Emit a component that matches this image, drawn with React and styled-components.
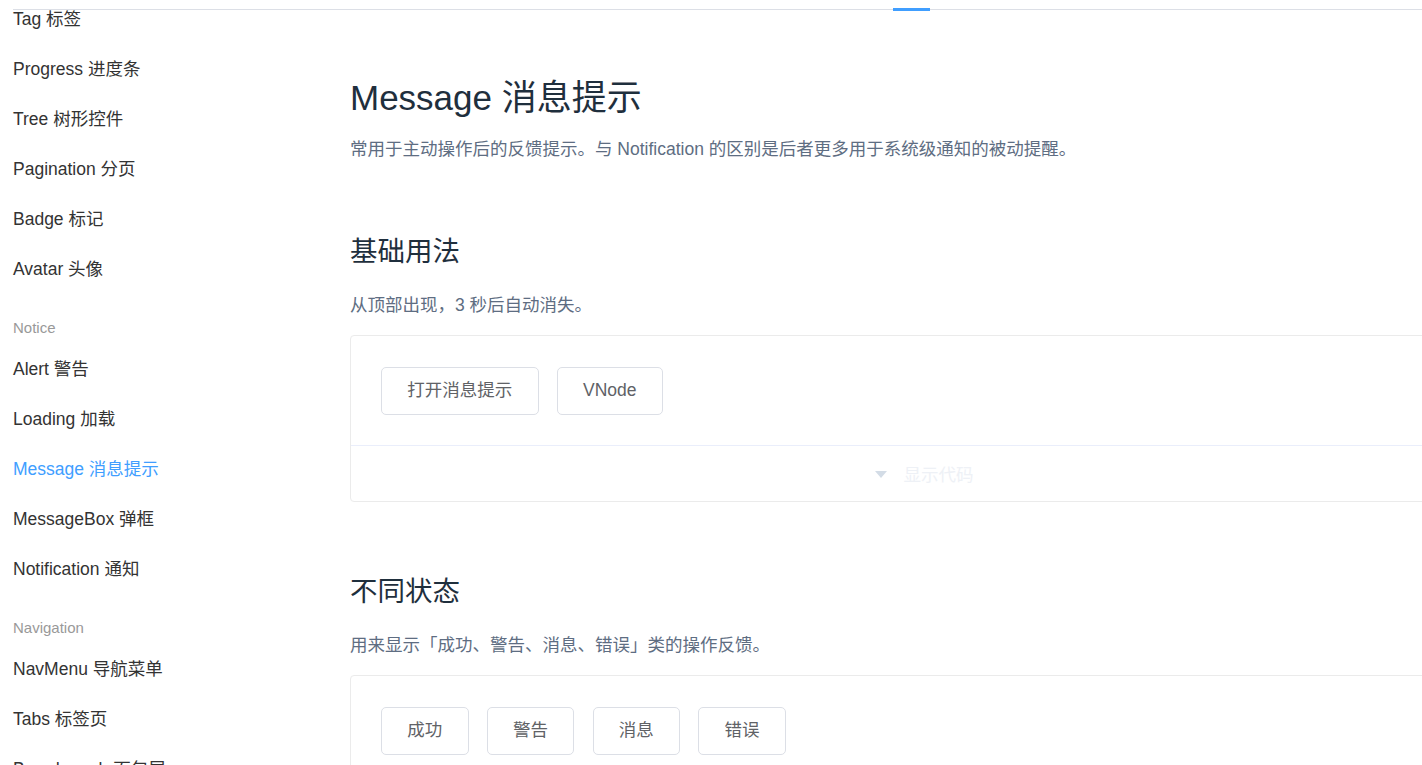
import React from "react";
import styled, { createGlobalStyle } from "styled-components";

const Global = createGlobalStyle`
  html, body {
    margin: 0;
    padding: 0;
    overflow: hidden;
    background: #fff;
    font-family: "Liberation Sans", "Noto Sans CJK SC", Arial, sans-serif;
  }
`;

const Page = styled.div`
  width: 1422px;
  height: 765px;
  overflow: hidden;
  display: flex;
  flex-direction: column;
`;

const Header = styled.header`
  position: relative;
  z-index: 2;
  display: flex;
  margin-left: 13px;
  height: 9px;
  border-bottom: 1px solid #dcdfe6;
  background: #fff;
  flex-shrink: 0;
`;

const HeaderTab = styled.div`
  margin-left: ${(p) => p.$offset}px;
  width: 37px;
  height: 11px;
  box-sizing: border-box;
  border-bottom: 3px solid ${(p) => (p.$active ? "#409eff" : "transparent")};
`;

const Body = styled.div`
  display: flex;
  flex: 1;
  min-height: 0;
`;

const Sidebar = styled.nav`
  width: 337px;
  padding-left: 13px;
  flex-shrink: 0;
  overflow: hidden;
`;

const NavList = styled.ul`
  list-style: none;
  margin: -16px 0 0;
  padding: 0;
`;

const NavItem = styled.li`
  height: 50px;
  line-height: 50px;
  font-size: 17.5px;
  color: ${(p) => (p.$active ? "#409eff" : "#333")};
  white-space: nowrap;
`;

const NavGroup = styled.li`
  margin-top: 18px;
  height: 32px;
  line-height: 32px;
  font-size: 15px;
  color: #999;
`;

const Main = styled.main`
  width: 1148px;
  flex-shrink: 0;
  padding-top: 62px;
`;

const Title = styled.h2`
  margin: 0;
  font-size: 35px;
  line-height: 52px;
  font-weight: 400;
  color: #1f2f3d;
`;

const Lead = styled.p`
  margin: 12px 0 0;
  font-size: 17.5px;
  line-height: 26px;
  color: #5e6d82;
`;

const SectionTitle = styled.h3`
  margin: 69px 0 0;
  font-size: 27.5px;
  line-height: 41px;
  font-weight: 400;
  color: #1f2f3d;
`;

const SectionText = styled.p`
  margin: 20px 0 0;
  font-size: 17.5px;
  line-height: 26px;
  color: #5e6d82;
`;

const DemoBlock = styled.div`
  margin-top: 17px;
  border: 1px solid #ebebeb;
  border-radius: 4px;
`;

const DemoSource = styled.div`
  display: flex;
  gap: 18.25px;
  padding: 31px 30px 30px;
`;

const Button = styled.button`
  height: 48px;
  padding: 0 25.25px;
  box-sizing: border-box;
  border: 1px solid #dcdfe6;
  border-radius: 5px;
  background: #fff;
  color: #606266;
  font-family: inherit;
  font-size: 17.5px;
  line-height: 1;
  white-space: nowrap;
  cursor: pointer;
`;

const DemoControl = styled.div`
  height: 55px;
  border-top: 1px solid #eaeefb;
  display: flex;
  align-items: center;
  justify-content: center;
  gap: 17px;
  color: #d3dce6;
`;

const ControlText = styled.span`
  font-size: 17.5px;
  color: #eef1f6;
`;

const Caret = () => (
  <svg width="12" height="7" viewBox="0 0 12 7" style={{ marginTop: 2 }}>
    <polygon points="0,0 12,0 6,7" fill="#d3dce6" />
  </svg>
);

const navData = [
  { t: "Tag 标签" },
  { t: "Progress 进度条" },
  { t: "Tree 树形控件" },
  { t: "Pagination 分页" },
  { t: "Badge 标记" },
  { t: "Avatar 头像" },
  { g: "Notice" },
  { t: "Alert 警告" },
  { t: "Loading 加载" },
  { t: "Message 消息提示", active: true },
  { t: "MessageBox 弹框" },
  { t: "Notification 通知" },
  { g: "Navigation" },
  { t: "NavMenu 导航菜单" },
  { t: "Tabs 标签页" },
  { t: "Breadcrumb 面包屑" },
];

const Demo = ({ buttons }) => (
  <DemoBlock>
    <DemoSource>
      {buttons.map((b) => (
        <Button key={b}>{b}</Button>
      ))}
    </DemoSource>
    <DemoControl>
      <Caret />
      <ControlText>显示代码</ControlText>
    </DemoControl>
  </DemoBlock>
);

export default function App() {
  return (
    <Page>
      <Global />
      <Header>
        <HeaderTab $offset={880} $active />
      </Header>
      <Body>
        <Sidebar>
          <NavList>
            {navData.map((n, i) =>
              n.g ? (
                <NavGroup key={i}>{n.g}</NavGroup>
              ) : (
                <NavItem key={i} $active={n.active}>
                  {n.t}
                </NavItem>
              )
            )}
          </NavList>
        </Sidebar>
        <Main>
          <Title>Message 消息提示</Title>
          <Lead>
            常用于主动操作后的反馈提示。与 Notification
            的区别是后者更多用于系统级通知的被动提醒。
          </Lead>
          <SectionTitle>基础用法</SectionTitle>
          <SectionText>从顶部出现，3 秒后自动消失。</SectionText>
          <Demo buttons={["打开消息提示", "VNode"]} />
          <SectionTitle>不同状态</SectionTitle>
          <SectionText>用来显示「成功、警告、消息、错误」类的操作反馈。</SectionText>
          <Demo buttons={["成功", "警告", "消息", "错误"]} />
        </Main>
      </Body>
    </Page>
  );
}
